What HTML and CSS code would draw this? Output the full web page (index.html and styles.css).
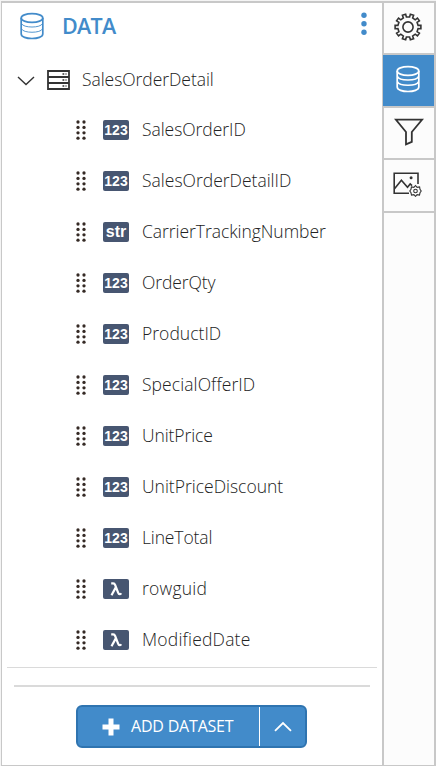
FILE: index.html
```html
<!DOCTYPE html>
<html lang="en">
<head>
<meta charset="utf-8">
<title>Data</title>
<link rel="stylesheet" href="styles.css">
</head>
<body>
<svg class="defs" width="0" height="0">
  <symbol id="grip" viewBox="0 0 10 20"><g fill="#352a25"><circle cx="2" cy="2" r="1.65"/><circle cx="8" cy="2" r="1.65"/><circle cx="2" cy="7.4" r="1.65"/><circle cx="8" cy="7.4" r="1.65"/><circle cx="2" cy="12.8" r="1.65"/><circle cx="8" cy="12.8" r="1.65"/><circle cx="2" cy="18.2" r="1.65"/><circle cx="8" cy="18.2" r="1.65"/></g></symbol>
  <symbol id="lambda" viewBox="0 0 14 14"><path d="M2.2 1.4H4.2Q5.6 1.4 6.1 3L9 10.4Q9.6 12.2 10.6 12.2Q11.6 12.2 12.2 11.2M6.8 5.4L2.5 13.2" fill="none" stroke="#fff" stroke-width="2.2"/></symbol>
  <symbol id="database" viewBox="0 0 24 28"><g fill="none" stroke="currentColor"><ellipse cx="12" cy="6" rx="10.8" ry="4.4" stroke-width="1.7"/><path d="M1.2 6V22C1.2 28 22.8 28 22.8 22V6" stroke-width="1.7"/><path d="M1.5 11.5C3 16.2 21 16.2 22.5 11.5M1.5 16.8C3 21.4 21 21.4 22.5 16.8" stroke-width="var(--ring,1.2)"/></g></symbol>
</svg>
<div class="app">
  <main class="panel">
    <header class="head">
      <svg class="head-icon" width="24" height="28"><use href="#database"/></svg>
      <h1>DATA</h1>
      <svg class="more" width="6" height="24" viewBox="0 0 6 24"><circle cx="3" cy="3.3" r="2.7"/><circle cx="3" cy="11.8" r="2.7"/><circle cx="3" cy="20.3" r="2.7"/></svg>
    </header>
    <div class="dataset">
      <svg class="chevron" width="18" height="10" viewBox="0 0 18 10"><path d="M1 1L9 8.6L17 1"/></svg>
      <svg class="table" width="23" height="20" viewBox="0 0 23 20"><path d="M1 1H22V19H1ZM1 7H22M1 13H22"/><path class="dots" d="M15.5 4H17.3M18.5 4H19.5M15.5 10H17.3M18.5 10H19.5M15.5 16H17.3M18.5 16H19.5"/></svg>
      <span class="name n0">SalesOrderDetail</span>
    </div>
    <ul class="fields">
      <li><svg class="grip"><use href="#grip"/></svg><b class="tag">123</b><span class="name n1">SalesOrderID</span></li>
      <li><svg class="grip"><use href="#grip"/></svg><b class="tag">123</b><span class="name n2">SalesOrderDetailID</span></li>
      <li><svg class="grip"><use href="#grip"/></svg><b class="tag str">str</b><span class="name n3">CarrierTrackingNumber</span></li>
      <li><svg class="grip"><use href="#grip"/></svg><b class="tag">123</b><span class="name n4">OrderQty</span></li>
      <li><svg class="grip"><use href="#grip"/></svg><b class="tag">123</b><span class="name n5">ProductID</span></li>
      <li><svg class="grip"><use href="#grip"/></svg><b class="tag">123</b><span class="name n6">SpecialOfferID</span></li>
      <li><svg class="grip"><use href="#grip"/></svg><b class="tag">123</b><span class="name n7">UnitPrice</span></li>
      <li><svg class="grip"><use href="#grip"/></svg><b class="tag">123</b><span class="name n8">UnitPriceDiscount</span></li>
      <li><svg class="grip"><use href="#grip"/></svg><b class="tag">123</b><span class="name n9">LineTotal</span></li>
      <li><svg class="grip"><use href="#grip"/></svg><b class="tag"><svg width="14" height="14"><use href="#lambda"/></svg></b><span class="name n10">rowguid</span></li>
      <li><svg class="grip"><use href="#grip"/></svg><b class="tag"><svg width="14" height="14"><use href="#lambda"/></svg></b><span class="name n11">ModifiedDate</span></li>
    </ul>
    <footer class="foot">
      <div class="rule"></div>
      <div class="split">
        <div class="add"><svg width="18" height="18" viewBox="0 0 18 18"><path d="M9 .5V17.5M.5 9H17.5" stroke="#fff" stroke-width="5"/></svg><span>ADD DATASET</span></div>
        <div class="up"><svg width="18" height="11" viewBox="0 0 18 11"><path d="M1 9.8L9 2L17 9.8" fill="none" stroke="#fff" stroke-width="1.8"/></svg></div>
      </div>
    </footer>
  </main>
  <nav class="side">
    <div class="tool t1"><svg width="28" height="28" viewBox="-14 -14 28 28"><path d="M12.89 -1.7V1.7L10.07 1.6L9.09 4.63L11.42 6.2L9.43 8.95L7.21 7.21L4.63 9.09L5.6 11.73L2.37 12.78L1.6 10.07H-1.6L-2.37 12.78L-5.6 11.73L-4.63 9.09L-7.21 7.21L-9.43 8.95L-11.42 6.2L-9.09 4.63L-10.07 1.6L-12.89 1.7V-1.7L-10.07 -1.6L-9.09 -4.63L-11.42 -6.2L-9.43 -8.95L-7.21 -7.21L-4.63 -9.09L-5.6 -11.73L-2.37 -12.78L-1.6 -10.07H1.6L2.37 -12.78L5.6 -11.73L4.63 -9.09L7.21 -7.21L9.43 -8.95L11.42 -6.2L9.09 -4.63L10.07 -1.6Z"/><circle r="5.1"/></svg></div>
    <div class="tool t2 active"><svg width="24" height="28"><use href="#database"/></svg></div>
    <div class="tool t3"><svg width="30" height="28" viewBox="0 0 30 28"><path d="M1.8 1.6H28.2L17.8 14V23.8L12 26.4V14Z" stroke-width="1.8"/></svg></div>
    <div class="tool t4"><svg width="29" height="25" viewBox="0 0 29 25"><path d="M16 21.3H1.2V1.2H25V12M1.5 16.8L8.4 8.2L14.5 15.3L17.2 12L19 13.7"/><circle cx="18.1" cy="5.7" r="1.5" class="sun"/><path class="minor" d="M22.5 13.5L24.1 15.4L26.6 15L27 17.3L28.2 19L27 20.8L26.5 23L24.1 22.6L22.5 24.3L20.9 22.6L18.5 23L18 20.8L16.8 19L18 17.3L18.4 15L20.9 15.4Z"/><circle class="minor" cx="22.5" cy="19" r="1.8"/></svg></div>
  </nav>
</div>
</body>
</html>
```
FILE: styles.css
```css
* { box-sizing: border-box; }
body { margin: 0; background: #f4f4f4; font-family: "Open Sans", "Noto Sans", sans-serif; color: #222; }
.defs { display: block; position: absolute; }
.app { display: flex; width: 435px; height: 765px; margin: 1px 0 0 1px; border: solid #c8c8c8; border-width: 2px 2px 1px 1px; background: #fff; }
.panel { width: 380px; flex: none; display: flex; flex-direction: column; }
.head { display: flex; height: 49px; padding: 9px 15px 0 18px; color: #428bca; }
.head-icon { --ring: .9; }
h1 { margin: -1px 0 0 18px; font-size: 21.5px; line-height: 30px; font-weight: 600; letter-spacing: -.7px; }
.more { margin-left: auto; fill: #428bca; }
.dataset { display: flex; align-items: center; height: 56px; padding-left: 15px; }
.chevron { fill: none; stroke: #333; stroke-width: 1.4; margin-top: 2px; }
.table { margin-left: 12px; fill: none; stroke: #333; stroke-width: 1.8; }
.dots { stroke-width: 1.6; }
.name { font-size: 17.5px; line-height: 24px; white-space: nowrap; font-weight: 350; padding-bottom: 2px; }
.dataset .name { margin-left: 12px; }
.n0 { letter-spacing: -.05px; }
.n1 { letter-spacing: -.05px; }
.n2 { letter-spacing: 0; }
.n3 { letter-spacing: -.05px; }
.n4 { letter-spacing: -.1px; }
.n5 { letter-spacing: .03px; }
.n6 { letter-spacing: .08px; }
.n7 { letter-spacing: -.1px; }
.n8 { letter-spacing: 0; }
.n9 { letter-spacing: -.13px; }
.n10 { letter-spacing: .22px; }
.n11 { letter-spacing: .2px; }
.fields { list-style: none; margin: -4px 0 0; padding: 0; }
.fields li { height: 51px; display: flex; align-items: center; padding-left: 74px; }
.grip { width: 10px; height: 20px; }
.tag { display: flex; align-items: center; justify-content: center; width: 26px; height: 20px; margin: 0 13px 0 17px; border-radius: 2px; background: #475671; color: #fff; font: bold 14px/20px "Liberation Sans", Arial, sans-serif; }
.str { font-size: 16px; line-height: 18px; }
.foot { margin: 2px 5px 0; border-top: 1px solid #dadada; }
.rule { height: 2px; background: #dadada; margin: 17px 7px 18px; }
.split { display: flex; width: 231px; height: 43px; margin-left: 69px; border: 2px solid #2f74b0; border-radius: 6px; background: #428bca; color: #fff; }
.add { width: 182px; display: flex; align-items: center; padding-left: 24px; border-right: 1px solid #fff; font-size: 16px; white-space: nowrap; }
.add span { margin-left: 11px; letter-spacing: -.2px; padding-bottom: 1px; }
.up { flex: 1; display: flex; align-items: center; justify-content: center; }
.side { width: 52px; flex: none; background: #fcfcfc; border-left: 2px solid #c8c8c8; }
.tool { display: flex; align-items: center; justify-content: center; border-bottom: 2px solid #c8c8c8; height: 52px; padding-right: 2px; }
.tool svg { fill: none; stroke: #333; stroke-width: 1.6; }
.t1 { padding-bottom: 2px; }
.t2 { height: 53px; margin-left: -1px; padding: 0 1px 3px 0; background: #428bca; color: #fff; }
.t2 svg { stroke: none; --ring: 1.6; }
.t3 { padding: 0 0 2px; }
.t4 { height: 53px; padding: 0 3px 3px 0; }
.tool .sun { fill: #333; stroke: none; }
.tool .minor { stroke-width: 1.1; }
```
